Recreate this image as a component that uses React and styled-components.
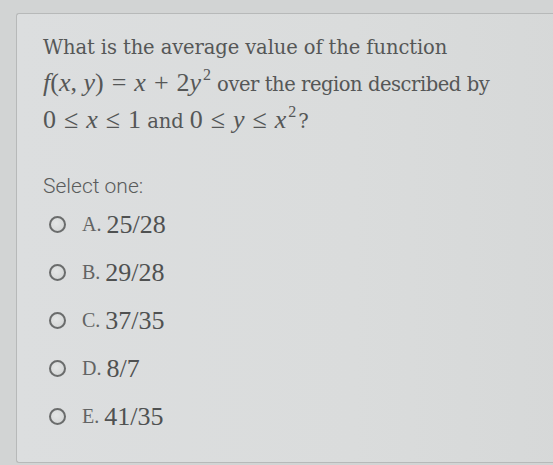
import React from 'react';
import styled, { createGlobalStyle } from 'styled-components';

const GlobalStyle = createGlobalStyle`
  * {
    margin: 0;
    padding: 0;
    box-sizing: border-box;
  }
  body {
    background: #d2d4d4;
    width: 553px;
    height: 465px;
    overflow: hidden;
  }
`

const Card = styled.section`
  margin: 13px 0 0 16px;
  width: 560px;
  height: 450px;
  border: 1px solid #b7b9b9;
  border-right: none;
  border-radius: 3px 0 0 3px;
  background: linear-gradient(90deg, #dcdedf 0%, #dadcdc 60%, #d6d8d8 100%);
  padding: 16px 0 0 26px;
  color: #555757;
`

const Question = styled.div`
  font-family: "DejaVu Serif", "Liberation Serif", serif;
  font-size: 19.5px;
  line-height: 35px;
  letter-spacing: -0.1px;
`

const Line = styled.div`
  white-space: nowrap;
  letter-spacing: ${p => p.$tight ? '-0.45px' : 'inherit'};
`

const Formula = styled.span`
  font-family: "Liberation Serif", "Times New Roman", serif;
  font-size: 26px;
  letter-spacing: 0;
  font-style: ${p => (p.$upright ? 'normal' : 'italic')};
`

const Op = styled.span`
  display: inline-block;
  font-family: "Liberation Serif", "DejaVu Serif", serif;
  font-size: 26px;
  letter-spacing: 0;
  margin: 0 8px;
`

const Sup = styled.sup`
  font-family: "Liberation Serif", serif;
  font-size: 16px;
  letter-spacing: 0;
  vertical-align: 11px;
  line-height: 0;
  margin-left: 2px;
  margin-right: ${p => p.$after || 1}px;
`

const Prompt = styled.p`
  margin-top: 35px;
  font-family: "Roboto", "Liberation Sans", sans-serif;
  font-weight: 300;
  font-size: 21px;
  color: #5a5c5c;
`

const Options = styled.ul`
  list-style: none;
  margin-top: 11px;
  display: flex;
  flex-direction: column;
  gap: 17px;
`

const Option = styled.li`
  display: flex;
  align-items: center;
  height: 31px;
  padding-left: 6px;
  font-family: "Liberation Serif", "Times New Roman", serif;
`

const Radio = styled.span`
  width: 17px;
  height: 17px;
  border-radius: 50%;
  border: 2px solid #6a6c6c;
  background: radial-gradient(circle at 40% 40%, #e4e6e6, #d0d2d2);
  margin-right: 16px;
  flex-shrink: 0;
`

const Letter = styled.span`
  font-size: 20px;
  color: #626464;
  margin-right: 5px;
`

const Answer = styled.span`
  font-size: 26px;
  color: #4f5151;
`

const choices = [
  ['A.', '25/28'],
  ['B.', '29/28'],
  ['C.', '37/35'],
  ['D.', '8/7'],
  ['E.', '41/35'],
]

export default function App() {
  return (
    <>
      <GlobalStyle />
      <Card>
        <Question>
          <Line>What is the average value of the function</Line>
          <Line $tight>
            <Formula>f</Formula><Formula $upright>(</Formula><Formula>x</Formula>
            <Formula $upright>, </Formula><Formula>y</Formula><Formula $upright>)</Formula>
            <Op>=</Op><Formula>x</Formula><Op>+</Op><Formula $upright>2</Formula>
            <Formula>y</Formula><Sup $after={6}>2</Sup>over the region described by
          </Line>
          <Line>
            <Formula $upright>0</Formula><Op>≤</Op><Formula>x</Formula><Op>≤</Op>
            <Formula $upright>1</Formula> and{' '}
            <Formula $upright>0</Formula><Op>≤</Op><Formula>y</Formula><Op>≤</Op>
            <Formula>x</Formula><Sup $after={2}>2</Sup>?
          </Line>
        </Question>
        <Prompt>Select one:</Prompt>
        <Options>
          {choices.map(([letter, value]) => (
            <Option key={letter}>
              <Radio />
              <Letter>{letter}</Letter>
              <Answer>{value}</Answer>
            </Option>
          ))}
        </Options>
      </Card>
    </>
  );
}
